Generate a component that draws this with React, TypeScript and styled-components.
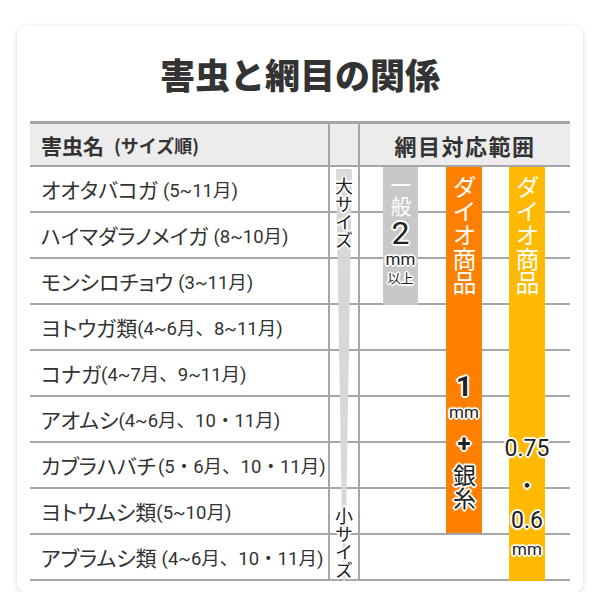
import React from 'react';
import styled, { createGlobalStyle, css } from 'styled-components';

const line = '#a6a6a6';
const ink = '#333333';

const GlobalStyle = createGlobalStyle`
  body {
    margin: 0;
    background: #ffffff;
    font-family: Roboto, "Noto Sans CJK JP", sans-serif;
    color: ${ink};
  }
`;

const outlined = css`
  text-shadow:
    1.5px 0 0 #fff, -1.5px 0 0 #fff, 0 1.5px 0 #fff, 0 -1.5px 0 #fff,
    1px 1px 0 #fff, -1px -1px 0 #fff, 1px -1px 0 #fff, -1px 1px 0 #fff,
    2px 0 1px #fff, -2px 0 1px #fff, 0 2px 1px #fff, 0 -2px 1px #fff;
`;

const Card = styled.div`
  margin: 26px 17px 0;
  padding: 0 13px 11px;
  background: #fff;
  border-radius: 8px;
  box-shadow: 0 1px 5px rgba(0, 0, 0, 0.16);
`;

const Title = styled.h1`
  margin: 0;
  height: 95px;
  line-height: 95px;
  text-align: center;
  font-family: "Noto Sans CJK JP", sans-serif;
  font-size: 35px;
  font-weight: 900;
  color: ${ink};
`;

const Table = styled.div`
  display: grid;
  grid-template-columns: 300px 30px 210px;
  grid-template-rows: 43px repeat(9, 46px);
  border-top: 3px solid ${line};
`;

const HeadCell = styled.div<{ $center?: boolean; $divider?: boolean }>`
  display: flex;
  align-items: center;
  justify-content: ${p => (p.$center ? 'center' : 'flex-start')};
  padding-left: ${p => (p.$center ? 0 : 11)}px;
  background: #ececec;
  border-bottom: 2px solid ${line};
  border-right: ${p => (p.$divider ? `2px solid ${line}` : 'none')};
  font-family: "Noto Sans CJK JP", sans-serif;
  font-weight: 700;
  font-size: 21px;
`;

const HeadSmall = styled.span`
  font-size: 18px;
  margin-left: 10px;
`;

const RangeHead = styled.span`
  font-size: 22px;
  letter-spacing: 1.5px;
`;

const NameCell = styled.div`
  display: flex;
  align-items: center;
  padding-left: 11px;
  border-bottom: 2px solid ${line};
  border-right: 2px solid ${line};
  white-space: nowrap;
`;

const PestName = styled.span`
  font-family: "Noto Sans CJK JP", sans-serif;
  font-size: 21px;
  font-feature-settings: "palt";
`;

const Season = styled.span<{ $gap: number }>`
  margin-left: ${p => p.$gap}px;
  font-size: 18.5px;
`;

const rowLines = css`
  background: repeating-linear-gradient(
    to bottom,
    transparent 0,
    transparent 44px,
    ${line} 44px,
    ${line} 46px
  );
`;

const SizeCell = styled.div`
  grid-column: 2;
  grid-row: 2 / span 9;
  position: relative;
  display: flex;
  flex-direction: column;
  justify-content: space-between;
  align-items: center;
  padding: 10px 0 2px;
  border-right: 2px solid ${line};
  ${rowLines};
`;

const Wedge = styled.svg`
  position: absolute;
  inset: 0;
  width: 100%;
  height: 100%;
`;

const SizeLabel = styled.span`
  position: relative;
  writing-mode: vertical-rl;
  font-family: "Noto Sans CJK JP", sans-serif;
  font-size: 18px;
  line-height: 1;
  color: #222;
  ${outlined};
`;

const RangeCell = styled.div`
  grid-column: 3;
  grid-row: 2 / span 9;
  display: flex;
  align-items: flex-start;
  padding-left: 23px;
  ${rowLines};
`;

const Bar = styled.div<{ $color: string; $height: number; $width: number; $gap: number }>`
  display: flex;
  flex-direction: column;
  align-items: center;
  flex: none;
  width: ${p => p.$width}px;
  height: ${p => p.$height}px;
  margin-right: ${p => p.$gap}px;
  padding-top: 8px;
  box-sizing: border-box;
  background: ${p => p.$color};
`;

const BarLabel = styled.span<{ $size: number }>`
  writing-mode: vertical-rl;
  font-family: "Noto Sans CJK JP", sans-serif;
  font-size: ${p => p.$size}px;
  line-height: 1;
  color: #fff;
`;

const Spec = styled.span<{ $size: number; $top?: number; $vertical?: boolean; $bold?: boolean }>`
  display: block;
  margin-top: ${p => p.$top || 0}px;
  writing-mode: ${p => (p.$vertical ? 'vertical-rl' : 'horizontal-tb')};
  font-size: ${p => p.$size}px;
  font-weight: ${p => (p.$bold ? 700 : 400)};
  line-height: 1;
  white-space: nowrap;
  color: #222;
  ${outlined};
`;

const CjkSpec = styled(Spec)`
  font-family: "Noto Sans CJK JP", sans-serif;
`;

const pests: [string, string, number][] = [
  ['オオタバコガ', '(5~11月)', 5],
  ['ハイマダラノメイガ', '(8~10月)', 5],
  ['モンシロチョウ', '(3~11月)', 5],
  ['ヨトウガ類', '(4~6月、8~11月)', 0],
  ['コナガ', '(4~7月、9~11月)', 0],
  ['アオムシ', '(4~6月、10・11月)', 0],
  ['カブラハバチ', '(5・6月、10・11月)', 2],
  ['ヨトウムシ類', '(5~10月)', 0],
  ['アブラムシ類', '(4~6月、10・11月)', 5],
];

export default function App() {
  return (
    <>
      <GlobalStyle />
      <Card>
        <Title>害虫と網目の関係</Title>
        <Table>
          <HeadCell $divider>
            害虫名<HeadSmall>(サイズ順)</HeadSmall>
          </HeadCell>
          <HeadCell $divider />
          <HeadCell $center>
            <RangeHead>網目対応範囲</RangeHead>
          </HeadCell>

          {pests.map(([name, season, gap], i) => (
            <NameCell key={name} style={{ gridRow: i + 2 }}>
              <PestName>{name}</PestName>
              <Season $gap={gap}>{season}</Season>
            </NameCell>
          ))}

          <SizeCell>
            <Wedge viewBox="0 0 28 414" preserveAspectRatio="none">
              <polygon points="6,2 22,2 15,414 13,414" fill="#d8d8d8" />
            </Wedge>
            <SizeLabel>大サイズ</SizeLabel>
            <SizeLabel>小サイズ</SizeLabel>
          </SizeCell>

          <RangeCell>
            <Bar $color="#c8c8c8" $width={35} $height={138} $gap={28}>
              <BarLabel $size={21}>一般</BarLabel>
              <Spec $size={32} $top={0}>2</Spec>
              <Spec $size={17} $top={2}>mm</Spec>
              <CjkSpec $size={13} $top={3}>以上</CjkSpec>
            </Bar>
            <Bar $color="#ff7f00" $width={36} $height={366} $gap={27}>
              <BarLabel $size={24}>ダイオ商品</BarLabel>
              <Spec $size={28} $top={78} $bold>1</Spec>
              <Spec $size={17} $top={3}>mm</Spec>
              <Spec $size={24} $top={11} $bold>+</Spec>
              <CjkSpec $size={23} $top={8} $vertical>銀糸</CjkSpec>
            </Bar>
            <Bar $color="#ffb900" $width={36} $height={414} $gap={0}>
              <BarLabel $size={24}>ダイオ商品</BarLabel>
              <Spec $size={23} $top={142}>0.75</Spec>
              <CjkSpec $size={22} $top={12}>・</CjkSpec>
              <Spec $size={23} $top={15}>0.6</Spec>
              <Spec $size={17} $top={9}>mm</Spec>
            </Bar>
          </RangeCell>
        </Table>
      </Card>
    </>
  );
}
